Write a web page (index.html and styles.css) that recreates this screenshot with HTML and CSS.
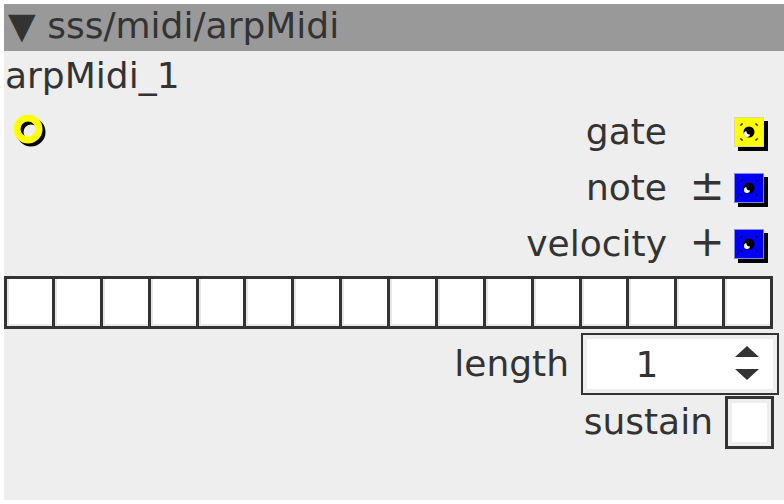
FILE: index.html
```html
<!doctype html>
<html lang="en">

<head>
  <meta charset="UTF-8" />
  <meta name="viewport" content="width=device-width, initial-scale=1.0" />
  <title>arpMidi</title>
  <link rel="stylesheet" href="styles.css">
</head>

<body>
  <div class="node">
    <div class="node-header">▼ sss/midi/arpMidi</div>
    <div class="node-title">arpMidi_1</div>

    <div class="ports">
      <div class="port-row">
        <svg class="inlet" width="36" height="36" viewBox="0 0 36 36">
          <circle cx="17" cy="17" r="11" fill="none" stroke="#000" stroke-width="7" />
          <circle cx="14" cy="14" r="11" fill="none" stroke="#ffff00" stroke-width="7" />
        </svg>
        <span class="port-label">gate</span>
        <span class="port-sym"></span>
        <svg class="outlet" width="34" height="34" viewBox="0 0 34 34">
          <rect x="4" y="4" width="30" height="30" fill="#000" />
          <rect x="0.5" y="0.5" width="29" height="29" fill="#ffff00" stroke="#d8d8a0" />
          <circle cx="15" cy="15" r="5.5" fill="#000" />
          <circle cx="13" cy="17" r="3" fill="#fff" />
          <circle cx="15.5" cy="14.5" r="3" fill="#000" />
          <path d="M7 7h2M7 7v2M23 7h-2M23 7v2M7 23h2M7 23v-2M23 23h-2M23 23v-2" stroke="#000" stroke-width="1" />
        </svg>
      </div>
      <div class="port-row">
        <span class="port-label">note</span>
        <span class="port-sym">±</span>
        <svg class="outlet" width="34" height="34" viewBox="0 0 34 34">
          <rect x="4" y="4" width="30" height="30" fill="#000" />
          <rect x="0.5" y="0.5" width="29" height="29" fill="#0000ff" stroke="#8888cc" />
          <circle cx="15" cy="15" r="5.5" fill="#000" />
          <circle cx="13" cy="17" r="3" fill="#fff" />
          <circle cx="15.5" cy="14.5" r="3" fill="#000" />
          <path d="M7 7h2M7 7v2M23 7h-2M23 7v2M7 23h2M7 23v-2M23 23h-2M23 23v-2" stroke="#000" stroke-width="1" />
        </svg>
      </div>
      <div class="port-row">
        <span class="port-label">velocity</span>
        <span class="port-sym">+</span>
        <svg class="outlet" width="34" height="34" viewBox="0 0 34 34">
          <rect x="4" y="4" width="30" height="30" fill="#000" />
          <rect x="0.5" y="0.5" width="29" height="29" fill="#0000ff" stroke="#8888cc" />
          <circle cx="15" cy="15" r="5.5" fill="#000" />
          <circle cx="13" cy="17" r="3" fill="#fff" />
          <circle cx="15.5" cy="14.5" r="3" fill="#000" />
          <path d="M7 7h2M7 7v2M23 7h-2M23 7v2M7 23h2M7 23v-2M23 23h-2M23 23v-2" stroke="#000" stroke-width="1" />
        </svg>
      </div>
    </div>

    <div class="steps">
      <div class="step"></div><div class="step"></div><div class="step"></div><div class="step"></div>
      <div class="step"></div><div class="step"></div><div class="step"></div><div class="step"></div>
      <div class="step"></div><div class="step"></div><div class="step"></div><div class="step"></div>
      <div class="step"></div><div class="step"></div><div class="step"></div><div class="step"></div>
    </div>

    <div class="param-row length-row">
      <span class="param-label">length</span>
      <div class="spinbox">
        <span class="spin-value">1</span>
        <svg class="spin-arrows" width="24" height="36" viewBox="0 0 24 36">
          <polygon points="12,0 24,11 0,11" fill="#333" />
          <polygon points="0,23 24,23 12,34" fill="#333" />
        </svg>
      </div>
    </div>

    <div class="param-row sustain-row">
      <span class="param-label">sustain</span>
      <div class="checkbox"></div>
    </div>
  </div>
</body>

</html>
```

FILE: styles.css
```css
body,
html {
  background-color: #ffffff;
  margin: 0;
  padding: 0;
}

.node {
  margin: 4px 0 0 4px;
  width: 780px;
  height: 496px;
  background-color: #eeeeee;
  color: #333333;
  font-family: "DejaVu Sans", Verdana, sans-serif;
  font-size: 36px;
}

.node-header {
  height: 47px;
  line-height: 44px;
  padding-left: 4px;
  background-color: #999999;
  white-space: nowrap;
}

.node-title {
  height: 53px;
  line-height: 50px;
  padding-left: 1px;
}

/* ports */
.ports {
  padding-right: 16px;
}

.port-row {
  display: flex;
  align-items: center;
  height: 56px;
}

.inlet {
  margin-left: 10px;
  margin-top: 2px;
}

.port-label {
  flex: 1;
  text-align: right;
  margin-top: -2px;
}

.port-sym {
  width: 36px;
  margin: -4px 9px 0 22px;
  font-size: 42px;
  line-height: 1;
  text-align: center;
}

.outlet {
  margin-top: 4px;
}

/* step grid */
.steps {
  display: flex;
  width: 766px;
  margin-top: 4px;
  border: 3px solid #333333;
  border-right: none;
}

.step {
  flex: 1;
  height: 47px;
  border-right: 3px solid #333333;
  background-color: #ffffff;
  box-shadow: inset 2px -2px 0 #e8e8e8;
}

/* params */
.param-row {
  display: flex;
  justify-content: flex-end;
  align-items: center;
}

.length-row {
  margin-top: 4px;
  padding-right: 5px;
}

.param-label {
  margin-right: 12px;
  margin-top: -2px;
}

.spinbox {
  display: flex;
  align-items: center;
  width: 178px;
  height: 52px;
  padding: 3px 4px 3px 12px;
  border: 2px solid #333333;
  background-color: #ffffff;
  box-shadow: inset 0 0 0 4px #eeeeee;
}

.spin-value {
  width: 104px;
  text-align: center;
}

.spin-arrows {
  margin-left: auto;
  margin-right: 14px;
}

.sustain-row {
  margin-top: 1px;
  padding-right: 10px;
}

.checkbox {
  width: 43px;
  height: 47px;
  border: 3px solid #333333;
  background-color: #ffffff;
  box-shadow: inset 0 0 0 4px #eeeeee;
}
```
